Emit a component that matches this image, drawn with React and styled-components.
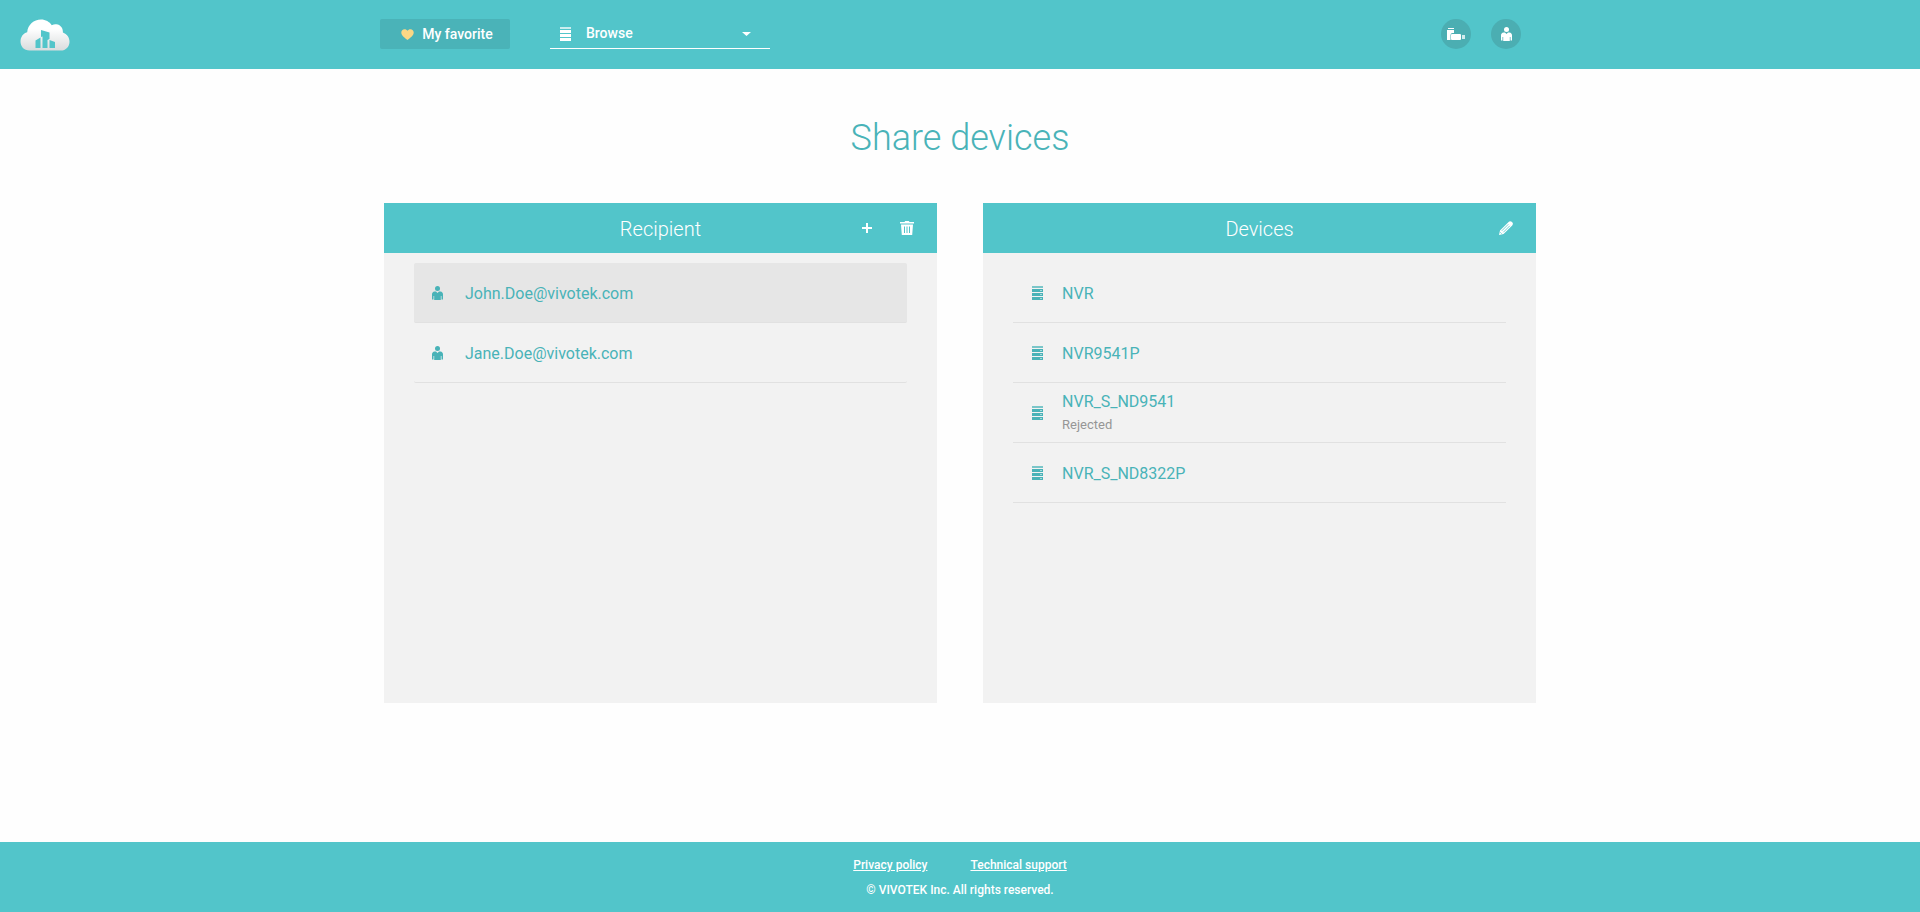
import React, { useState } from "react";
import styled, { createGlobalStyle, css } from "styled-components";

const color = {
  brand: "#52c5ca",
  brandDark: "#4ab3b8",
  brandRound: "#4baeb2",
  text: "#49b3b8",
  panel: "#f2f2f2",
  selected: "#e6e6e6",
  line: "#e1e1e1",
  muted: "#969696",
  heart: "#fbd785",
};

const GlobalStyle = createGlobalStyle`
  *, *::before, *::after { box-sizing: border-box; }
  body {
    margin: 0;
    background: #fefefe;
    font-family: Roboto, "Liberation Sans", sans-serif;
    font-size: 14px;
  }
  button, select { font: inherit; color: inherit; }
  svg { display: block; flex: none; }
`;

const Page = styled.div`
  display: flex;
  flex-direction: column;
  min-height: 100vh;
`;

const Header = styled.header`
  display: grid;
  grid-template-columns: 1fr minmax(720px, 1160px) 1fr;
  align-items: start;
  height: 69px;
  padding-top: 19px;
  background: ${color.brand};
  color: #fff;
`;

const Logo = styled.a`
  justify-self: start;
  margin-left: 20px;
`;

const Toolbar = styled.nav`
  display: flex;
  align-items: center;
  padding-right: 19px;
`;

const FavoriteButton = styled.button`
  display: flex;
  align-items: center;
  justify-content: center;
  gap: 8px;
  width: 130px;
  height: 30px;
  padding: 0 0 0 4px;
  border: 0;
  border-radius: 2px;
  background: ${color.brandDark};
  font-weight: 500;
  cursor: pointer;
`;

const BrowseField = styled.label`
  display: flex;
  align-items: center;
  width: 220px;
  height: 30px;
  margin-left: 40px;
  padding: 0 19px 0 10px;
  border-bottom: 1px solid #fff;
`;

const BrowseSelect = styled.select`
  flex: 1;
  height: 28px;
  padding: 0 0 2px 15px;
  border: 0;
  background: none;
  appearance: none;
  font-weight: 500;
  cursor: pointer;

  option { color: #333; }
`;

const Actions = styled.div`
  display: flex;
  gap: 20px;
  margin-left: auto;
`;

const RoundButton = styled.button`
  display: grid;
  place-items: center;
  width: 30px;
  height: 30px;
  padding: 0;
  border: 0;
  border-radius: 50%;
  background: ${color.brandRound};
  cursor: pointer;
`;

const Main = styled.main`
  flex: 1;
  width: 60%;
  min-width: 720px;
  margin: 0 auto;
  padding: 45px 0 40px;
`;

const Title = styled.h1`
  margin: 0 0 41px;
  color: ${color.text};
  font-size: 36px;
  font-weight: 300;
  line-height: 48px;
  text-align: center;
`;

const Panels = styled.div`
  display: grid;
  grid-template-columns: 1fr 1fr;
  gap: 4%;
`;

const Panel = styled.section`
  background: ${color.panel};
`;

const PanelHeader = styled.div`
  display: grid;
  grid-template-columns: 1fr auto 1fr;
  align-items: center;
  height: 50px;
  padding: 0 10px;
  background: ${color.brand};
  color: #fff;
`;

const PanelTitle = styled.h2`
  grid-column: 2;
  margin: 0;
  padding-top: 2px;
  font-size: 20px;
  font-weight: 300;
`;

const PanelTools = styled.div`
  display: flex;
  justify-self: end;
`;

const ToolButton = styled.button`
  display: grid;
  place-items: center;
  width: 40px;
  height: 40px;
  padding: 0;
  border: 0;
  background: none;
  cursor: pointer;
`;

const List = styled.ul`
  min-height: 450px;
  margin: 0;
  padding: 10px 30px;
  list-style: none;
`;

const rowLayout = css`
  display: flex;
  align-items: center;
  gap: 19px;
  width: 100%;
  height: 60px;
  padding: 0 19px;
  border: 0;
  border-bottom: 1px solid ${color.line};
  background: ${(p) => (p.$selected ? color.selected : "none")};
  color: ${color.text};
  font-size: 16px;
  text-align: left;
`;

const DeviceRow = styled.li`
  ${rowLayout}
`;

const RecipientRow = styled.button`
  ${rowLayout}
  gap: 22px;
  padding: 0 18px;
  border-radius: 2px;
  cursor: pointer;
`;

const RowText = styled.span`
  padding-top: 2px;
  line-height: 24px;
`;

const Status = styled.span`
  display: block;
  margin-bottom: 2px;
  color: ${color.muted};
  font-size: 13px;
  line-height: 22px;
`;

const Footer = styled.footer`
  display: flex;
  flex-direction: column;
  align-items: center;
  gap: 9px;
  height: 70px;
  padding-top: 15px;
  background: ${color.brand};
  color: #fff;
  font-size: 12px;
  font-weight: 500;
  line-height: 16px;
`;

const FooterLinks = styled.div`
  display: flex;
  gap: 43px;

  a { color: inherit; }
`;

const Copyright = styled.div``;

const CloudLogo = () => (
  <svg width="50" height="32" viewBox="0 0 50 32" aria-hidden="true">
    <defs>
      <linearGradient id="cloud" x1="0" y1="0" x2="0" y2="1">
        <stop offset="0.3" stopColor="#fff" />
        <stop offset="1" stopColor="#d9dcdd" />
      </linearGradient>
    </defs>
    <path
      fill="url(#cloud)"
      d="M9.500 31.500C4 31.500.5 27.500.5 22.500c0-4.500 2.600-8.200 6.700-9.300C7.800 5.800 13.800.5 21 .5c4.600 0 8.500 2.200 10.800 5.800 1.400-.8 3-1.200 4.500-1 4.200.4 6.900 4 6.600 8.200 4 1.500 6.600 5 6.600 9.200 0 5-3.700 8.800-8.700 8.800z"
    />
    <path
      fill={color.brand}
      d="M15.500 21.500l5-3v10.500h-5zM21 11l8.500 2.500V20L27.500 21v8h-5V17.500L21 18zM29.500 21l5.500 2v6h-5.500z"
    />
  </svg>
);

const HeartIcon = () => (
  <svg width="13" height="11" viewBox="0 0 13 11" fill={color.heart} aria-hidden="true">
    <path d="M6.500 11C4 9.200.3 6.700.3 3.600.3 1.600 1.700.2 3.600.2c1.200 0 2.300.6 2.900 1.600C7.100.8 8.200.2 9.400.2c1.900 0 3.300 1.400 3.300 3.400 0 3.100-3.700 5.600-6.200 7.400z" />
  </svg>
);

const ServerIcon = () => (
  <svg width="11" height="14" viewBox="0 0 11 14" fill="currentColor" aria-hidden="true">
    <path opacity="0.7" d="M0 0h11v2H0z" />
    <path d="M0 3h11v3H0zM0 7h11v3H0zM0 11h11v3H0z" />
    <path fill="#fff" opacity="0.5" d="M8 4h2v1H8zM8 8h2v1H8zM8 12h2v1H8z" />
  </svg>
);

const PersonIcon = () => (
  <svg width="11" height="14" viewBox="0 0 11 14" fill="currentColor" aria-hidden="true">
    <circle cx="5.500" cy="2.500" r="2.500" />
    <path d="M2.500 5.500h1.500L5.500 7 7 5.500h1.500C10 5.700 11 6.800 11 8.300V13.500H9.500V10h-.7v4H2.200v-4h-.7v3.500H0V8.300C0 6.800 1 5.700 2.500 5.500z" />
  </svg>
);

const CameraIcon = () => (
  <svg width="18" height="12" viewBox="0 0 18 12" fill="#fff" aria-hidden="true">
    <path d="M1 0h6v1H1zM0 2h7v3H5.500Q3.500 5 3.500 7v5H0z" />
    <rect x="4" y="6" width="10" height="6" rx="1" />
    <rect x="15" y="7" width="3" height="4" opacity="0.75" />
  </svg>
);

const CaretIcon = () => (
  <svg width="9" height="4" viewBox="0 0 9 4" fill="#fff" aria-hidden="true">
    <path d="M0 0h9L4.500 4z" />
  </svg>
);

const PlusIcon = () => (
  <svg width="10" height="10" viewBox="0 0 10 10" fill="#fff" aria-hidden="true">
    <path d="M4 0h2v4h4v2H6v4H4V6H0V4h4z" />
  </svg>
);

const TrashIcon = () => (
  <svg width="14" height="14" viewBox="0 0 14 14" aria-hidden="true">
    <path fill="#fff" d="M0 1h4.500l.7-1h3.600l.7 1H14v1.500H0zM1 3.500h12L12.200 14H1.800z" />
    <path stroke={color.brand} d="M4.500 5.500v6.500M7 5.500v6.500M9.500 5.500v6.500" />
  </svg>
);

const PencilIcon = () => (
  <svg width="14" height="14" viewBox="0 0 14 14" aria-hidden="true">
    <path
      fill="#fff"
      d="M0 14l1-4.500L9.600.9C10.500 0 11.700-.1 12.700.8l.5.500c1 1 .9 2.200 0 3.100L4.600 13z"
    />
    <path
      stroke={color.brand}
      strokeWidth="0.800"
      fill="none"
      d="M2.800 9.800l6.500-6.500M4.300 11.300l6.500-6.500M1.300 11.300l1.400 1.400"
    />
  </svg>
);

const recipients = ["John.Doe@vivotek.com", "Jane.Doe@vivotek.com"];

const devices = [
  { name: "NVR" },
  { name: "NVR9541P" },
  { name: "NVR_S_ND9541", status: "Rejected" },
  { name: "NVR_S_ND8322P" },
];

export default function App() {
  const [selected, setSelected] = useState(recipients[0]);

  return (
    <Page>
      <GlobalStyle />
      <Header>
        <Logo href="#" aria-label="Home">
          <CloudLogo />
        </Logo>
        <Toolbar>
          <FavoriteButton type="button">
            <HeartIcon />
            My favorite
          </FavoriteButton>
          <BrowseField>
            <ServerIcon />
            <BrowseSelect aria-label="Browse" defaultValue="browse">
              <option value="browse">Browse</option>
            </BrowseSelect>
            <CaretIcon />
          </BrowseField>
          <Actions>
            <RoundButton type="button" aria-label="Cameras">
              <CameraIcon />
            </RoundButton>
            <RoundButton type="button" aria-label="Account">
              <PersonIcon />
            </RoundButton>
          </Actions>
        </Toolbar>
      </Header>

      <Main>
        <Title>Share devices</Title>
        <Panels>
          <Panel>
            <PanelHeader>
              <PanelTitle>Recipient</PanelTitle>
              <PanelTools>
                <ToolButton type="button" aria-label="Add recipient">
                  <PlusIcon />
                </ToolButton>
                <ToolButton type="button" aria-label="Delete recipient">
                  <TrashIcon />
                </ToolButton>
              </PanelTools>
            </PanelHeader>
            <List>
              {recipients.map((email) => (
                <li key={email}>
                  <RecipientRow
                    type="button"
                    $selected={email === selected}
                    aria-pressed={email === selected}
                    onClick={() => setSelected(email)}
                  >
                    <PersonIcon />
                    <RowText>{email}</RowText>
                  </RecipientRow>
                </li>
              ))}
            </List>
          </Panel>

          <Panel>
            <PanelHeader>
              <PanelTitle>Devices</PanelTitle>
              <PanelTools>
                <ToolButton type="button" aria-label="Edit devices">
                  <PencilIcon />
                </ToolButton>
              </PanelTools>
            </PanelHeader>
            <List>
              {devices.map(({ name, status }) => (
                <DeviceRow key={name}>
                  <ServerIcon />
                  <RowText>
                    {name}
                    {status && <Status>{status}</Status>}
                  </RowText>
                </DeviceRow>
              ))}
            </List>
          </Panel>
        </Panels>
      </Main>

      <Footer>
        <FooterLinks>
          <a href="#privacy">Privacy policy</a>
          <a href="#support">Technical support</a>
        </FooterLinks>
        <Copyright>© VIVOTEK Inc. All rights reserved.</Copyright>
      </Footer>
    </Page>
  );
}
